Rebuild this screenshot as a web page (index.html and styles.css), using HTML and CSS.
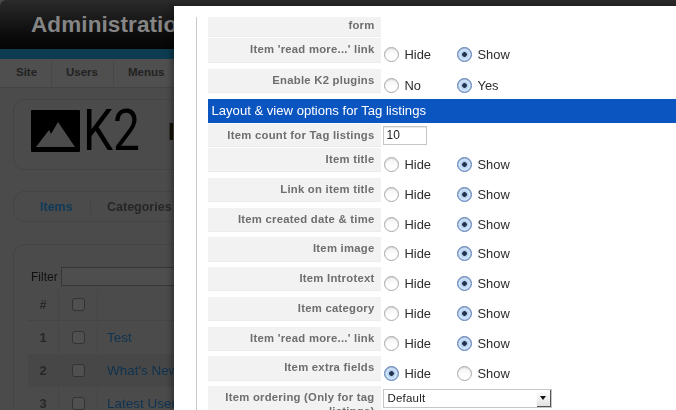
FILE: index.html
```html
<!DOCTYPE html>
<html lang="en">
<head>
<meta charset="utf-8">
<title>K2 parameters</title>
<link rel="stylesheet" href="styles.css">
</head>
<body>
<div class="page">
  <header class="top"><h1 class="brand">Administration</h1></header>
  <div class="band"></div>
  <nav class="menu">
    <span class="menu-item menu-site">Site</span>
    <span class="menu-item menu-users">Users</span>
    <span class="menu-item menu-menus">Menus</span>
  </nav>
  <div class="panel k2-panel">
    <svg class="k2-logo" width="49" height="42" viewBox="0 0 49 42"><rect width="49" height="42" rx="1" fill="#000"/><path d="M5 37 L18 20 L20 24 L27 12 L44 37 Z" fill="#4c4c4c"/></svg>
    <span class="k2-word">K2</span>
    <span class="k2-title">I</span>
  </div>
  <div class="panel tabs">
    <span class="tab tab-on">Items</span>
    <span class="tab">Categories</span>
  </div>
  <div class="panel list">
    <div class="filter"><span class="filter-label">Filter</span><span class="filter-input"></span></div>
    <div class="trow thead"><span class="c-num">#</span><span class="c-box"><i class="check"></i></span><span class="c-title"></span></div>
    <div class="trow"><span class="c-num">1</span><span class="c-box"><i class="check"></i></span><span class="c-title">Test</span></div>
    <div class="trow odd"><span class="c-num">2</span><span class="c-box"><i class="check"></i></span><span class="c-title">What's New</span></div>
    <div class="trow"><span class="c-num">3</span><span class="c-box"><i class="check"></i></span><span class="c-title">Latest User</span></div>
  </div>
</div>

<div class="modal">
  <div class="form">
    <div class="row tight first"><div class="label">form</div></div>
    <div class="row wide"><div class="label">Item 'read more...' link</div><div class="value"><span class="opt"><i class="radio"></i>Hide</span><span class="opt"><i class="radio on"></i>Show</span></div></div>
    <div class="row wide"><div class="label">Enable K2 plugins</div><div class="value"><span class="opt"><i class="radio"></i>No</span><span class="opt"><i class="radio on"></i>Yes</span></div></div>
    <div class="section">Layout &amp; view options for Tag listings</div>
    <div class="row tight count"><div class="label">Item count for Tag listings</div><div class="value value-input"><span class="text-input">10</span></div></div>
    <div class="row"><div class="label">Item title</div><div class="value"><span class="opt"><i class="radio"></i>Hide</span><span class="opt"><i class="radio on"></i>Show</span></div></div>
    <div class="row"><div class="label">Link on item title</div><div class="value"><span class="opt"><i class="radio"></i>Hide</span><span class="opt"><i class="radio on"></i>Show</span></div></div>
    <div class="row"><div class="label">Item created date &amp; time</div><div class="value"><span class="opt"><i class="radio"></i>Hide</span><span class="opt"><i class="radio on"></i>Show</span></div></div>
    <div class="row"><div class="label">Item image</div><div class="value"><span class="opt"><i class="radio"></i>Hide</span><span class="opt"><i class="radio on"></i>Show</span></div></div>
    <div class="row"><div class="label">Item Introtext</div><div class="value"><span class="opt"><i class="radio"></i>Hide</span><span class="opt"><i class="radio on"></i>Show</span></div></div>
    <div class="row"><div class="label">Item category</div><div class="value"><span class="opt"><i class="radio"></i>Hide</span><span class="opt"><i class="radio on"></i>Show</span></div></div>
    <div class="row"><div class="label">Item 'read more...' link</div><div class="value"><span class="opt"><i class="radio"></i>Hide</span><span class="opt"><i class="radio on"></i>Show</span></div></div>
    <div class="row"><div class="label">Item extra fields</div><div class="value"><span class="opt"><i class="radio on"></i>Hide</span><span class="opt"><i class="radio"></i>Show</span></div></div>
    <div class="row ordering"><div class="label">Item ordering (Only for tag listings)</div><div class="value value-input"><span class="select">Default<i class="select-arrow"></i></span></div></div>
  </div>
</div>
</body>
</html>
```

FILE: styles.css
```css
* { box-sizing: border-box; }
html, body { margin: 0; height: 100%; overflow: hidden; }
body { background: #4b4b4b; font-family: "Liberation Sans", Arial, sans-serif; position: relative; }

.page { height: 410px; overflow: hidden; filter: blur(0.6px); }
.top { height: 49px; background: linear-gradient(#2a2a2a, #262626 10%, #0a0a0a 75%, #050505); border-radius: 6px 0 0 0; padding: 12px 0 0 31px; }
.brand { margin: 0; font-size: 22.5px; line-height: 26px; font-weight: 700; color: #858585; letter-spacing: 0.1px; }
.band { height: 10px; background: #0d3b50; }
.menu { height: 29px; display: flex; border-bottom: 1px solid #444; background: #4f4f4f; align-items: center; font-size: 11.5px; font-weight: 700; color: #222; }
.menu-item { height: 100%; line-height: 27px; border-right: 1px solid #484848; }
.menu-site { width: 52px; padding-left: 16px; }
.menu-users { width: 62px; padding-left: 14px; }
.menu-menus { padding-left: 14px; border: 0; }

.panel { border: 1px solid #444; border-radius: 11px; margin-left: 13px; }
.k2-panel { height: 71px; margin-top: 11px; display: flex; align-items: flex-start; padding: 10px 0 0 17px; }
.k2-word { font-family: Roboto, "Liberation Sans", sans-serif; font-weight: 400; font-size: 57px; line-height: 42px; color: #000; width: 60px; margin-left: 3px; transform: scaleX(0.84); transform-origin: left center; }
.k2-title { font-size: 24px; font-weight: 700; line-height: 44px; margin-left: 25px; color: #161208; }
.tabs { height: 31px; margin-top: 21px; display: flex; align-items: center; font-size: 12.5px; font-weight: 700; color: #262626; padding-left: 26px; }
.tab-on { color: #0f3a58; width: 51px; border-right: 1px solid #444; margin-right: 16px; }
.list { margin-top: 22px; height: 180px; padding: 22px 0 0 14px; }
.filter { display: flex; align-items: center; height: 19px; font-size: 12px; color: #111; margin-left: 3px; }
.filter-label { width: 30px; }
.filter-input { flex: 1; height: 19px; border: 1px solid #363636; background: #4e4e4e; }
.trow { display: flex; height: 33px; align-items: center; font-size: 13px; color: #222; }
.thead { height: 32px; margin-top: 3px; font-size: 12px; border-bottom: 1px solid #454545; }
.odd { background: #474747; }
.c-num { width: 31px; text-align: center; border-right: 1px solid #464646; line-height: 32px; color: #282828; font-weight: 700; }
.c-box { width: 39px; height: 100%; display: flex; align-items: center; justify-content: center; border-right: 1px solid #464646; }
.c-title { padding-left: 9px; font-size: 13.5px; color: #0f3350; }
.check { display: block; width: 13px; height: 13px; border: 1px solid #333; border-radius: 3px; background: #505050; }

.modal { position: absolute; left: 174px; top: 6px; right: 0; bottom: 0; background: #fff; box-shadow: -3px 0 5px rgba(0,0,0,.3); padding: 11px 0 0 22px; filter: blur(0.45px); }
.form { border-left: 1.5px solid #c9c9c9; padding-left: 10.5px; height: 500px; }
.row { display: flex; height: 24.2px; margin-bottom: 5.6px; }
.wide { height: 24.5px; margin-bottom: 6px; }
.tight { margin-bottom: 1px; }
.first { height: 20px; }
.count { height: 22.8px; margin-bottom: 1.2px; }
.label { width: 173px; flex: none; background: #f2f2f2; border-bottom: 1px solid #ececec; text-align: right; padding: 4px 6px 0 0; font-size: 11.3px; line-height: 14px; font-weight: 700; color: #6e6e6e; letter-spacing: 0.25px; }
.first .label { padding-top: 1px; }
.value { padding: 9px 0 0 3px; display: flex; font-size: 12.9px; line-height: 15px; color: #2c2c2c; }
.opt { display: flex; align-items: center; width: 73px; }
.radio { display: block; width: 15px; height: 15px; border-radius: 50%; border: 1px solid #a9a9a9; background: linear-gradient(#f3f3f3, #fff 70%); margin-right: 6px; position: relative; box-shadow: inset 0 1px 1px rgba(0,0,0,.12); }
.radio.on { border-color: #5d7fb4; background: radial-gradient(circle at 50% 50%, #24324a 0 2px, #a6c8ee 2.6px, #d6e7fa 5px, #8fb3e2 7.5px); }
.section { background: #0b55c0; color: #fff; height: 24px; line-height: 23px; font-size: 13.1px; padding-left: 4px; margin: 0 0 1px; }
.value-input { padding: 2px 0 0 2px; }
.text-input { display: block; width: 44px; height: 19px; border: 1px solid #c6c6c6; box-shadow: inset 0 1px 1px rgba(0,0,0,.1); font-size: 12px; line-height: 17px; padding-left: 3px; color: #222; }
.ordering .value-input { padding-top: 3px; }
.select { display: block; position: relative; width: 169px; height: 19px; border: 1px solid #c6c6c6; font-size: 11.5px; line-height: 17px; padding-left: 4px; color: #222; letter-spacing: 0.2px; }
.select-arrow { position: absolute; right: 0; top: 0; width: 14px; height: 17px; background: linear-gradient(#fff, #e2e2e2); border-right: 1px solid #555; border-bottom: 1px solid #555; }
.select-arrow::after { content: ""; position: absolute; left: 3px; top: 6px; border: 3.5px solid transparent; border-top: 4px solid #111; border-bottom: 0; }
.ordering { height: 40px; }
```
